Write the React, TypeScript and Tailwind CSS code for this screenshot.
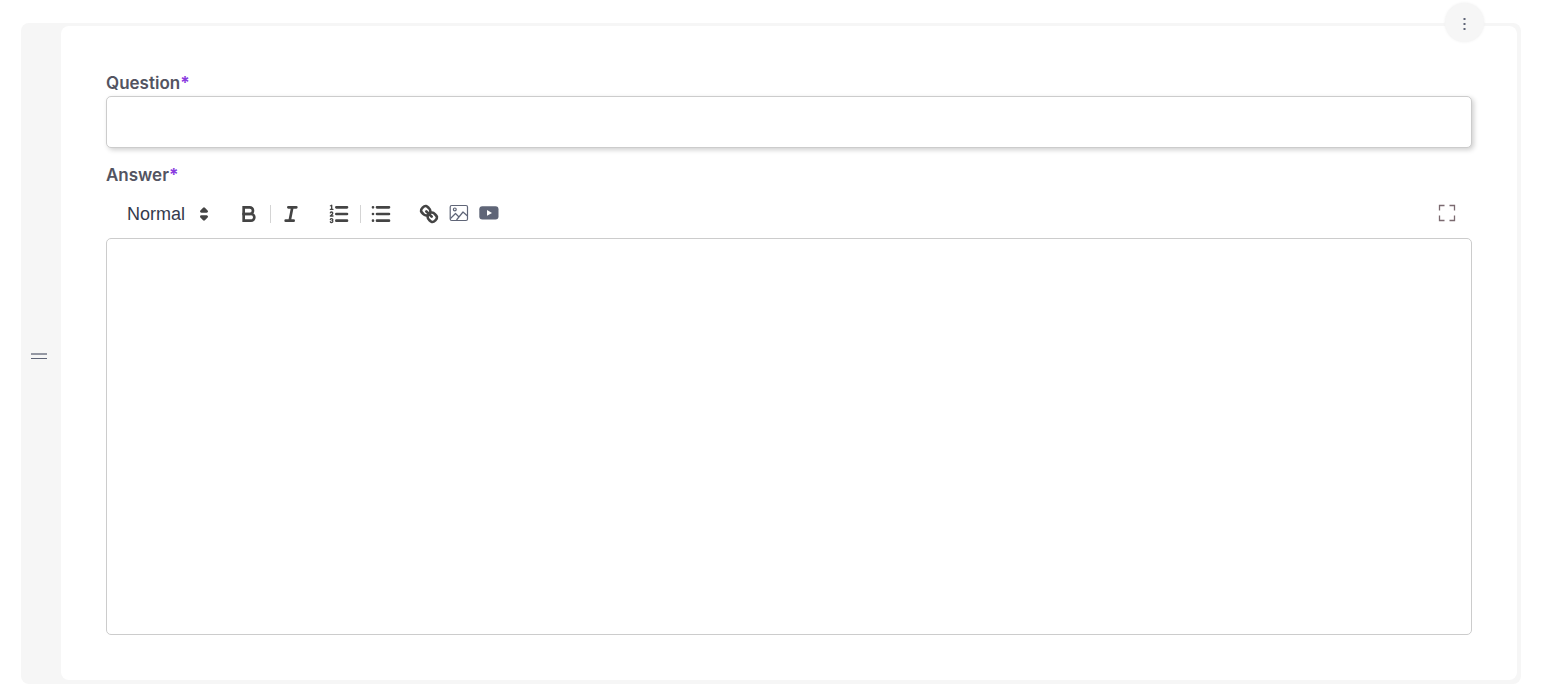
import { useState } from "react";

const HEADINGS = ["Heading 1", "Heading 2", "Heading 3", "Normal"];

interface ToolButtonProps {
  label: string;
  children: React.ReactNode;
}

function ToolButton({ label, children }: ToolButtonProps) {
  return (
    <button
      type="button"
      aria-label={label}
      className="flex h-8 w-[30px] items-center justify-center text-[#444444] hover:text-violet-600"
    >
      {children}
    </button>
  );
}

function Separator() {
  return <span className="mr-[5px] ml-[6px] h-[18px] w-px bg-[#d4d4d4]" />;
}

function FieldLabel({ htmlFor, text }: { htmlFor: string; text: string }) {
  return (
    <label
      htmlFor={htmlFor}
      className="block font-['Inter',sans-serif] text-[17px] leading-6 font-semibold text-[#535461]"
    >
      {text}
      <span className="font-bold text-[#8a3ddf]">*</span>
    </label>
  );
}

function BoldIcon() {
  return (
    <svg className="size-6" viewBox="0 0 18 18" fill="none" stroke="currentColor" strokeWidth="2">
      <path d="M5,4H9.5A2.5,2.5,0,0,1,12,6.5v0A2.5,2.5,0,0,1,9.5,9H5A0,0,0,0,1,5,9V4A0,0,0,0,1,5,4Z" />
      <path d="M5,9h5.5A2.5,2.5,0,0,1,13,11.5v0A2.5,2.5,0,0,1,10.5,14H5a0,0,0,0,1,0,0V9A0,0,0,0,1,5,9Z" />
    </svg>
  );
}

function ItalicIcon() {
  return (
    <svg className="size-6" viewBox="0 0 18 18" fill="none" stroke="currentColor" strokeWidth="2" strokeLinecap="round">
      <path d="M7 4H13M5 14H11M8 14L10 4" />
    </svg>
  );
}

function OrderedListIcon() {
  return (
    <svg className="size-6" viewBox="0 0 18 18" fill="none" stroke="currentColor" strokeLinecap="round" strokeLinejoin="round">
      <path strokeWidth="2" d="M7 4H15M7 9H15M7 14H15" />
      <path d="M2.5 5.5H4.5" />
      <path
        fill="currentColor"
        stroke="none"
        d="M3.5,6A0.5,0.5,0,0,1,3,5.5V3.085l-0.276.138A0.5,0.5,0,0,1,2.053,3c-0.124-.247-0.023-0.324.224-0.447l1-.5A0.5,0.5,0,0,1,4,2.5v3A0.5,0.5,0,0,1,3.5,6Z"
      />
      <path d="M4.5,10.5h-2c0-.234,1.85-1.076,1.85-2.234A0.959,0.959,0,0,0,2.5,8.156" />
      <path d="M2.5,14.846a0.959,0.959,0,0,0,1.85-.109A0.7,0.7,0,0,0,3.75,14a0.688,0.688,0,0,0,.6-0.736,0.959,0.959,0,0,0-1.85-.109" />
    </svg>
  );
}

function BulletListIcon() {
  return (
    <svg className="size-6" viewBox="0 0 18 18" fill="none" stroke="currentColor" strokeWidth="2" strokeLinecap="round">
      <path d="M6 4H15M6 9H15M6 14H15M3 4H3M3 9H3M3 14H3" />
    </svg>
  );
}

function LinkIcon() {
  return (
    <svg className="size-6" viewBox="0 0 18 18" fill="none" stroke="currentColor" strokeWidth="2" strokeLinecap="round" strokeLinejoin="round">
      <path d="M7 7L11 11" />
      <path d="M8.9,4.577a3.476,3.476,0,0,1,.36,4.679A3.476,3.476,0,0,1,4.577,8.9C3.185,7.5,2.035,6.4,4.217,4.217S7.5,3.185,8.9,4.577Z" />
      <path d="M13.423,9.1a3.476,3.476,0,0,0-4.679-.36,3.476,3.476,0,0,0,.36,4.679c1.392,1.392,2.5,2.542,4.679.36S14.815,10.5,13.423,9.1Z" />
    </svg>
  );
}

function ImageIcon() {
  return (
    <svg className="h-5 w-5" viewBox="0 0 20 20" fill="none" stroke="#5f6577" strokeWidth="1.2" strokeLinejoin="round">
      <rect x="1.2" y="1.5" width="17.3" height="15" rx="1.5" />
      <circle cx="5.8" cy="5.4" r="1.4" />
      <path d="M1.5 14.5L6.5 9.5L9.5 12.5M7.5 16L14 8L18.5 12" />
    </svg>
  );
}

function VideoIcon() {
  return (
    <svg className="h-5 w-5" viewBox="0 0 20 20">
      <rect x="0.3" y="2.2" width="19.2" height="13.4" rx="3" fill="#5f6577" />
      <path d="M8 6L13 8.9L8 11.8Z" fill="#ffffff" />
    </svg>
  );
}

function FullscreenIcon() {
  return (
    <svg className="size-5" viewBox="0 0 20 20" fill="none" stroke="#7b6a70" strokeWidth="1.3">
      <path d="M2.5 6.5V1.5H7.5M12.5 1.5H17.5V6.5M17.5 11.5V16.5H12.5M7.5 16.5H2.5V11.5" />
    </svg>
  );
}

export default function App() {
  const [question, setQuestion] = useState("");
  const [answer, setAnswer] = useState("");
  const [format, setFormat] = useState("Normal");

  return (
    <div className="bg-white pt-[23px] pr-5 pb-[6px] pl-[21px]">
      <div className="relative flex rounded-lg bg-[#f6f6f6] pt-[3px] pr-1 pb-1">
        {/* Drag handle */}
        <button
          type="button"
          aria-label="Reorder"
          className="flex w-10 shrink-0 cursor-grab items-center justify-center pt-[6px] pr-1"
        >
          <svg className="h-2 w-4" viewBox="0 0 16 8">
            <rect y="1" width="16" height="2" fill="#9498a3" />
            <rect y="6" width="16" height="1" fill="#5f6577" />
          </svg>
        </button>

        {/* Card options */}
        <button
          type="button"
          aria-label="Options"
          className="absolute -top-5 right-[37px] flex size-[39px] items-center justify-center rounded-full bg-[#f6f6f6] shadow-[0_0_3px_#eeeeee]"
        >
          <svg className="h-[15px] w-[3px]" viewBox="0 0 3 15" fill="#5f6577">
            <rect x="0.5" y="3" width="2" height="2" />
            <rect x="0.5" y="8" width="2" height="2" />
            <rect x="0.5" y="13" width="2" height="2" />
          </svg>
        </button>

        <form className="min-w-0 flex-1 rounded-lg bg-white p-[45px]">
          <FieldLabel htmlFor="question" text="Question" />
          <input
            id="question"
            type="text"
            value={question}
            onChange={(e) => setQuestion(e.target.value)}
            className="mt-px block h-[52px] w-full rounded-[5px] border border-[#cccccc] bg-white px-4 text-lg shadow-[2px_2px_5px_#d0d0d0] outline-none focus:border-violet-500"
          />

          <div className="mt-[15px]">
            <FieldLabel htmlFor="answer" text="Answer" />
          </div>

          {/* Toolbar */}
          <div className="mt-[11px] flex h-8 items-center pr-[10px] pl-5">
            <div className="relative mr-[18px] h-8 w-[90px]">
              <select
                aria-label="Text style"
                value={format}
                onChange={(e) => setFormat(e.target.value)}
                className="h-8 w-full appearance-none bg-transparent pl-px font-['Liberation_Sans',sans-serif] text-lg leading-8 text-[#343a4c] outline-none"
              >
                {HEADINGS.map((h) => (
                  <option key={h} value={h}>
                    {h}
                  </option>
                ))}
              </select>
              <svg
                className="pointer-events-none absolute top-1 right-0 size-6 text-[#444444]"
                viewBox="0 0 18 18"
                fill="currentColor"
                stroke="currentColor"
                strokeWidth="2"
                strokeLinecap="round"
                strokeLinejoin="round"
              >
                <path d="M7 11L9 13L11 11ZM7 7L9 5L11 7Z" />
              </svg>
            </div>

            <ToolButton label="Bold"><BoldIcon /></ToolButton>
            <Separator />
            <ToolButton label="Italic"><ItalicIcon /></ToolButton>

            <div className="ml-[18px] flex items-center">
              <ToolButton label="Numbered list"><OrderedListIcon /></ToolButton>
              <Separator />
              <ToolButton label="Bullet list"><BulletListIcon /></ToolButton>
            </div>

            <div className="ml-[18px] flex items-center">
              <ToolButton label="Insert link"><LinkIcon /></ToolButton>
              <ToolButton label="Insert image"><ImageIcon /></ToolButton>
              <ToolButton label="Insert video"><VideoIcon /></ToolButton>
            </div>

            <div className="ml-auto">
              <ToolButton label="Fullscreen"><FullscreenIcon /></ToolButton>
            </div>
          </div>

          <textarea
            id="answer"
            value={answer}
            onChange={(e) => setAnswer(e.target.value)}
            className="mt-2 block h-[397px] w-full resize-none rounded-[5px] border border-[#cccccc] bg-white px-4 py-3 text-lg outline-none focus:border-violet-500"
          />
        </form>
      </div>
    </div>
  );
}
